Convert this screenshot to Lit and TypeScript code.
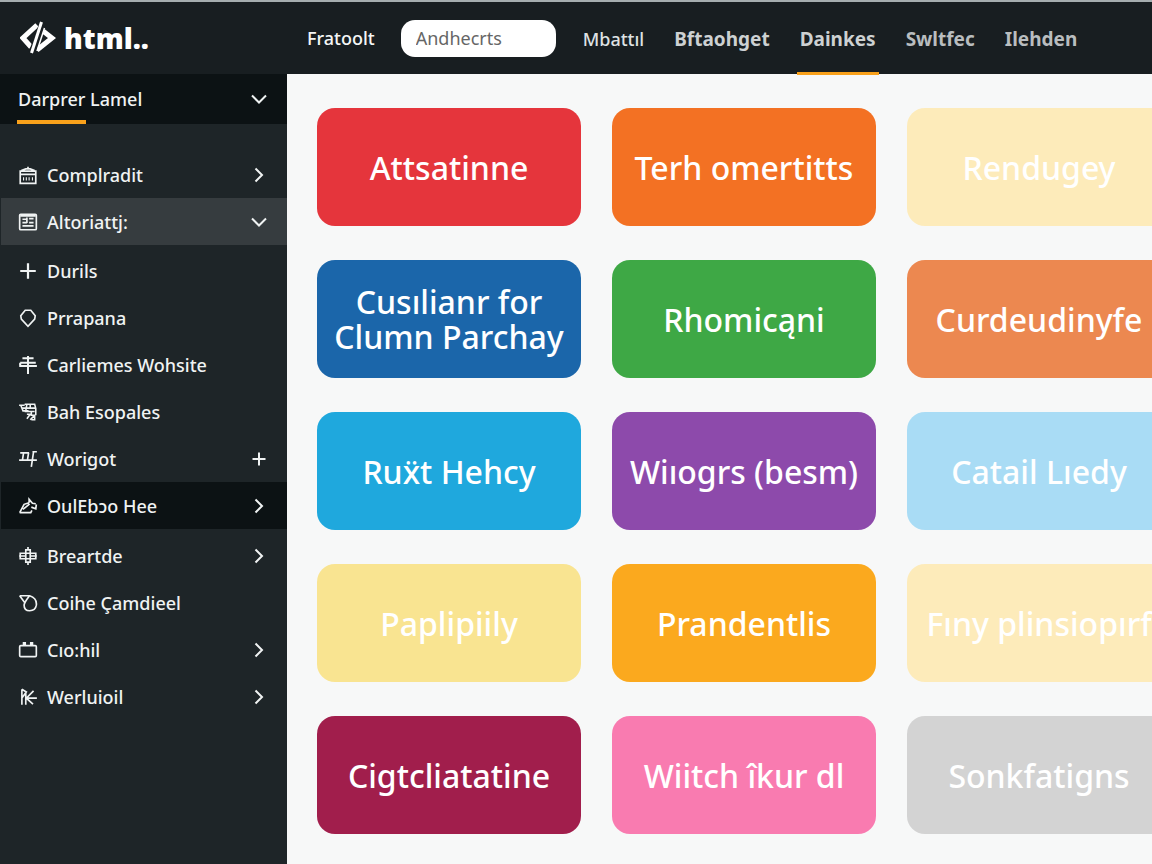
import { LitElement, html, css, svg } from "lit";
import { customElement } from "lit/decorators.js";
import { classMap } from "lit/directives/class-map.js";

type Item = { icon: string; label: string; end?: "right" | "down" | "plus"; tone?: "active" | "dark" };

const icons: Record<string, unknown> = {
  archive: svg`<path d="M2 5.500h14v11H2zM2 8.500h14M3 5l4-1.500h4l4 1.500M9 1.500v2"/><path d="M5 11v3M7.500 11v3M10 11v3M13 11v3" stroke-width="1"/>`,
  news: svg`<rect x="1.500" y="2" width="15" height="14" rx="1"/><path d="M2 3.500h14M4 6.500h4M10 6h4M4 9.500h4M10 9.500h4M4 12.500h10M8 5v5"/>`,
  plus: svg`<path d="M9 2v14M2 9h14" stroke-width="2"/>`,
  tag: svg`<path d="M6.500 2h5L15.500 7l-.5 3-6 6.500L3 10 2.500 7z"/>`,
  signpost: svg`<path d="M9 1v16M4 3h10M2 7v3h15M1 8.500h1M2 7h14" stroke-width="1.800"/>`,
  cart: svg`<path d="M1 3h5M2.500 3l2 5h5M6 2h9l1 4v6M4 5.500h12M8 2l-1 6M11 2v4M6 8.500h9M8 11h3l-3 4M12 9v3h3v4h-3M15 12l-4 4" stroke-width="1.400"/>`,
  flag: svg`<path d="M1 10h16M4 10l1-6.500M2 3.500h8M13 2.500h4M14 2.500L12 16M9.500 3.500l-1 6.500"/>`,
  hand: svg`<path d="M1.500 15h10l1-2M1.500 15l4-7.500L10 6M4.500 12l6-5M10 6V3l3 3.500 3 .5M12 10l4 1.500.5-4"/>`,
  globe: svg`<path d="M7 3.500h4v11H7zM2 6.500h14v5H2zM1 9h6M11 9h6M9 1v2.500M9 14.500V17"/>`,
  leaf: svg`<path d="M1.500 2.500h9C15 4 17 7 16.500 11c-.5 3-3 5-6 5s-5-2-5-5c0-2 1.500-4 4.500-8M1.500 2.500l4.500 6"/>`,
  briefcase: svg`<rect x="1.500" y="5" width="15" height="10" rx="1"/><path d="M5 5V2.500h1.500V5M11.500 5V2.500H13V5"/>`,
  sparkle: svg`<path d="M3.500 2v14M3.500 2l4 2.500-4 5.500M7 10h10M7 5v11M14 3.500L7.500 10l6 5.500"/>`,
};

const ends: Record<string, unknown> = {
  right: svg`<path d="M5.500 2.500L12 9l-6.500 6.500"/>`,
  down: svg`<path d="M2 5.500L9 12.500l7-7"/>`,
  plus: svg`<path d="M9 2.500v13M2.500 9h13"/>`,
};

const groups: Item[][] = [
  [
    { icon: "archive", label: "Complradit", end: "right" },
    { icon: "news", label: "Altoriattj:", end: "down", tone: "active" },
  ],
  [
    { icon: "plus", label: "Durils" },
    { icon: "tag", label: "Prrapana" },
    { icon: "signpost", label: "Carliemes Wohsite" },
    { icon: "cart", label: "Bah Esopales" },
    { icon: "flag", label: "Worigot", end: "plus" },
    { icon: "hand", label: "OulEbɔo Hee", end: "right", tone: "dark" },
  ],
  [
    { icon: "globe", label: "Breartde", end: "right" },
    { icon: "leaf", label: "Coihe Çamdieel" },
    { icon: "briefcase", label: "Cıo:hil", end: "right" },
    { icon: "sparkle", label: "Werluioil", end: "right" },
  ],
];

const tabs = [
  { label: "Mbattıl", tone: "near" },
  { label: "Bftaohget", tone: "far" },
  { label: "Dainkes", tone: "far", current: true },
  { label: "Swltfec", tone: "faint" },
  { label: "Ilehden", tone: "faint" },
];

const tiles = [
  ["Attsatinne", "red"],
  ["Terh omertitts", "orange"],
  ["Rendugey", "cream"],
  ["Cusılianr for Clumn Parchay", "blue"],
  ["Rhomicąni", "green"],
  ["Curdeudinyfe", "coral"],
  ["Ruẍt Hehcy", "sky"],
  ["Wiıogrs (besm)", "purple"],
  ["Catail Lıedy", "ice"],
  ["Paplipiily", "straw"],
  ["Prandentlis", "amber"],
  ["Fıny plinsiopırf", "cream"],
  ["Cigtcliatatine", "wine"],
  ["Wiitch îkur dl", "pink"],
  ["Sonkfatigns", "grey"],
];

@customElement("side-menu")
export class SideMenu extends LitElement {
  static styles = css`
    :host {
      display: block;
      background: #1e2528;
      color: #f0f3f3;
      font-size: 18px;
      line-height: 24px;
    }
    .picker {
      display: flex;
      align-items: center;
      justify-content: space-between;
      width: 100%;
      height: 50px;
      padding: 0 19px 0 18px;
      border: 0;
      background: #0c1214;
      color: inherit;
      font: inherit;
      font-weight: 500;
      position: relative;
      cursor: pointer;
    }
    .picker::after {
      content: "";
      position: absolute;
      left: 17px;
      bottom: 0;
      width: 69px;
      height: 4px;
      background: #f9a11b;
    }
    nav {
      padding-top: 27px;
    }
    ul {
      list-style: none;
      margin: 0;
      padding: 0;
    }
    ul + ul {
      padding-top: 2px;
    }
    ul + ul + ul {
      padding-top: 3px;
    }
    .item {
      display: flex;
      align-items: center;
      gap: 9px;
      height: 47px;
      margin-left: 1px;
      padding: 0 19px 0 17px;
      color: inherit;
      text-decoration: none;
      font-weight: 500;
    }
    .active {
      background: #363c3f;
    }
    .dark {
      background: #0c1214;
    }
    .label {
      flex: 1;
      white-space: nowrap;
    }
    svg {
      flex: none;
      fill: none;
      stroke: currentColor;
    }
    .icon {
      width: 20px;
      height: 20px;
      stroke-width: 1.5;
    }
    .end {
      width: 18px;
      height: 18px;
      stroke-width: 2;
    }
  `;

  render() {
    return html`
      <button class="picker" type="button" aria-haspopup="listbox">
        <span>Darprer Lamel</span>
        <svg class="end" viewBox="0 0 18 18" aria-hidden="true">${ends.down}</svg>
      </button>
      <nav aria-label="Sections">
        ${groups.map(
          (group) => html`<ul>
            ${group.map(
              (item) => html`<li>
                <a href="#" class=${classMap({ item: true, active: item.tone === "active", dark: item.tone === "dark" })}>
                  <svg class="icon" viewBox="0 0 18 18" aria-hidden="true">${icons[item.icon]}</svg>
                  <span class="label">${item.label}</span>
                  ${item.end ? html`<svg class="end" viewBox="0 0 18 18" aria-hidden="true">${ends[item.end]}</svg>` : null}
                </a>
              </li>`
            )}
          </ul>`
        )}
      </nav>
    `;
  }
}

@customElement("top-bar")
export class TopBar extends LitElement {
  static styles = css`
    :host {
      display: flex;
      box-sizing: border-box;
      height: 74px;
      border-top: 2px solid #a5adaf;
      background: #181e21;
      color: #f4f6f6;
      font-size: 18px;
      line-height: 24px;
    }
    .brand {
      display: flex;
      align-items: center;
      gap: 8px;
      box-sizing: border-box;
      width: 307px;
      flex: none;
      padding-left: 20px;
      color: #fff;
      text-decoration: none;
      font: 800 28px/36px "Open Sans", "Noto Sans", sans-serif;
    }
    .mark {
      width: 36px;
      height: 34px;
    }
    .bar {
      display: flex;
      align-items: center;
      gap: 26px;
      white-space: nowrap;
    }
    a {
      color: inherit;
      text-decoration: none;
    }
    .lead {
      font-weight: 500;
    }
    .search {
      box-sizing: border-box;
      width: 155px;
      height: 37px;
      padding: 0 15px;
      border: 0;
      border-radius: 14px;
      background: #fff;
      color: #444;
      font: inherit;
    }
    .search::placeholder {
      color: #666;
      opacity: 1;
    }
    .tabs {
      display: flex;
      align-self: stretch;
      gap: 24px;
      margin-left: -2px;
    }
    .tab {
      display: flex;
      align-items: center;
      box-sizing: border-box;
      height: 73px;
      padding: 3px 3px 0;
      border-bottom: 3px solid transparent;
      font-size: 19px;
      font-weight: 700;
    }
    .near {
      color: #dfe2e3;
      font-size: 18px;
      font-weight: 500;
    }
    .far {
      color: #cdd1d2;
    }
    .faint {
      color: #b9bdbf;
    }
    .current {
      border-bottom-color: #f9a11b;
    }
  `;

  render() {
    return html`
      <a class="brand" href="#">
        <svg class="mark" viewBox="0 0 36 34" aria-hidden="true">
          <path d="M17 4L3 17l8 9M23 10l9 7-15 12" fill="none" stroke="#fff" stroke-width="5" />
          <path d="M23 2L12 32" stroke="#181e21" stroke-width="7" />
          <path d="M21.500 1L11.500 32" stroke="#fff" stroke-width="3" />
          <path d="M24.500 7L17 30" stroke="#fff" stroke-width="1.500" />
        </svg>
        <span>html..</span>
      </a>
      <div class="bar">
        <a class="lead" href="#">Fratoolt</a>
        <input class="search" type="text" aria-label="Search" placeholder="Andhecrts" />
        <nav class="tabs" aria-label="Main">
          ${tabs.map(
            (t) => html`<a href="#" class=${classMap({ tab: true, [t.tone]: true, current: !!t.current })}>${t.label}</a>`
          )}
        </nav>
      </div>
    `;
  }
}

@customElement("app-root")
export class AppRoot extends LitElement {
  static styles = css`
    :host {
      display: grid;
      grid-template: auto 1fr / 287px minmax(0, 1fr);
      min-height: 100vh;
      overflow: hidden;
      font-family: "Noto Sans", "Open Sans", sans-serif;
      background: #f7f8f8;
    }
    top-bar {
      grid-column: 1 / -1;
      z-index: 1;
    }
    main {
      padding: 34px 0 30px 30px;
      overflow: hidden;
    }
    .tiles {
      display: grid;
      grid-template-columns: repeat(3, minmax(0, 1fr));
      grid-auto-rows: 118px;
      gap: 34px 31px;
      margin-right: -19px;
    }
    .tile {
      border: 0;
      border-radius: 18px;
      padding: 0 12px;
      color: #fff;
      font: 500 32px/35px "Noto Sans", "Open Sans", sans-serif;
      cursor: pointer;
    }
    .red { background: #e5353c; }
    .orange { background: #f37123; }
    .cream { background: #fdebba; }
    .blue { background: #1b66aa; }
    .green { background: #3ea845; }
    .coral { background: #ec8850; }
    .sky { background: #1fa8dd; }
    .purple { background: #8d4aab; }
    .ice { background: #a9dcf5; }
    .straw { background: #f9e491; }
    .amber { background: #fba91e; }
    .wine { background: #a11e4c; }
    .pink { background: #f97bb0; }
    .grey { background: #d3d3d3; }
  `;

  render() {
    return html`
      <top-bar></top-bar>
      <side-menu></side-menu>
      <main>
        <div class="tiles">
          ${tiles.map(([label, tone]) => html`<button type="button" class=${classMap({ tile: true, [tone]: true })}>${label}</button>`)}
        </div>
      </main>
    `;
  }
}
